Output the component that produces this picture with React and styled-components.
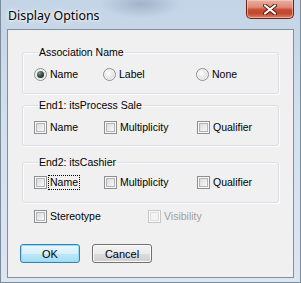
import React from "react";
import styled, { createGlobalStyle, css } from "styled-components";

const GlobalStyle = createGlobalStyle`
  html, body {
    margin: 0;
    padding: 0;
    background: #fff;
  }
  body {
    font-family: "Liberation Sans", Arial, sans-serif;
  }
`;

const Window = styled.div`
  box-sizing: border-box;
  width: 301px;
  height: 283px;
  display: flex;
  flex-direction: column;
  border: 1px solid #7b8c9d;
  border-top: none;
  background: linear-gradient(180deg, #c3d4e6 0%, #d2dfed 40%, #dbe6f1 100%);
`;

const TitleBar = styled.div`
  height: 29px;
  flex: none;
  display: flex;
  justify-content: space-between;
  align-items: flex-start;
  padding-left: 7px;
  background: radial-gradient(ellipse 40px 14px at 140px 4px, rgba(120, 140, 165, 0.45), transparent);
`;

const Title = styled.div`
  margin-top: 8px;
  font-family: "Noto Sans", "Open Sans", sans-serif;
  font-size: 12.4px;
  line-height: 15px;
  color: #000;
  text-shadow: 0 0 6px #fff, 0 0 3px #fff;
`;

const CloseButton = styled.div`
  width: 48px;
  height: 19px;
  margin-right: 6px;
  box-sizing: border-box;
  border: 1px solid #6a2318;
  border-top: none;
  border-radius: 0 0 5px 5px;
  background: linear-gradient(180deg, #eab0a2 0%, #dc8a76 40%, #c74a32 55%, #c4472e 75%, #d98468 100%);
  box-shadow: inset 0 0 0 1px rgba(255, 215, 200, 0.55);
  display: flex;
  align-items: center;
  justify-content: center;
`;

const Client = styled.div`
  flex: 1;
  margin: 0 6px 4px 6px;
  border: 1px solid #828f9c;
  background: #f0f0f0;
  padding: 16px 0 0 12px;
  display: flex;
  flex-direction: column;
  align-items: flex-start;
`;

const Group = styled.fieldset`
  box-sizing: border-box;
  width: 257px;
  margin: ${(p) => p.$mt || 0}px 0 0 2px;
  padding: ${(p) => p.$pt}px 0 ${(p) => p.$pb}px 11px;
  border: 1px solid #dcdfe3;
  border-radius: 3px;
  box-shadow: inset 1px 1px 0 #fbfbfb, 1px 1px 0 #fbfbfb;
  min-width: 0;
`;

const Legend = styled.legend`
  margin-left: 4px;
  padding: 0 1px;
  font-size: 10.5px;
  line-height: 13px;
  color: #000;
`;

const Row = styled.div`
  display: grid;
  grid-template-columns: ${(p) => p.$cols};
  align-items: center;
  height: 14px;
`;

const Option = styled.div`
  display: flex;
  align-items: center;
`;

const Box = styled.span`
  flex: none;
  box-sizing: border-box;
  width: 13px;
  height: 13px;
  border: 1px solid #8e8f8f;
  background: linear-gradient(135deg, #d3d3d3 0%, #f3f3f3 70%, #fdfdfd 100%);
  box-shadow: inset 0 0 0 1px #f8f8f8, inset 0 0 0 2px #b2b6bb;
  ${(p) =>
    p.$disabled &&
    css`
      border-color: #c6c6c6;
      background: #f4f4f4;
      box-shadow: inset 0 0 0 1px #fbfbfb, inset 0 0 0 2px #dcdcdc;
    `}
`;

const Radio = styled.span`
  flex: none;
  box-sizing: border-box;
  width: 13px;
  height: 13px;
  border-radius: 50%;
  border: 1px solid #8e8f8f;
  background: radial-gradient(circle at 40% 40%, #fdfdfd 0%, #e4e4e4 55%, #c9c9c9 100%);
  box-shadow: inset 0 0 0 1px #f4f4f4;
  display: flex;
  align-items: center;
  justify-content: center;
`;

const Dot = styled.span`
  width: 7px;
  height: 7px;
  border-radius: 50%;
  background: radial-gradient(circle at 35% 30%, #7c9a86 0%, #2b4535 55%, #0f1f16 100%);
`;

const Label = styled.span`
  margin-left: 1px;
  padding: 0 1px;
  border: 1px solid transparent;
  font-size: 10.5px;
  line-height: 13px;
  color: ${(p) => (p.$disabled ? "#a0a0a0" : "#000")};
  white-space: nowrap;
  ${(p) =>
    p.$focused &&
    css`
      border: 1px dotted #000;
    `}
`;

const BottomRow = styled.div`
  display: grid;
  grid-template-columns: 114px auto;
  align-items: center;
  height: 14px;
  margin-top: 6px;
  padding-left: 14px;
`;

const Buttons = styled.div`
  display: flex;
  gap: 12px;
  margin-top: 21px;
`;

const Button = styled.div`
  box-sizing: border-box;
  width: 60px;
  height: 19px;
  border: 1px solid #707070;
  border-radius: 3px;
  background: linear-gradient(180deg, #f2f2f2 0%, #ebebeb 50%, #dddddd 51%, #cfcfcf 100%);
  box-shadow: inset 0 0 0 1px #fbfbfb;
  display: flex;
  align-items: center;
  justify-content: center;
  font-size: 11px;
  color: #000;
  ${(p) =>
    p.$default &&
    css`
      border-color: #3c7fb1;
      background: linear-gradient(180deg, #eaf7fd 0%, #d6f0fb 50%, #bde7f8 51%, #a8dcf2 100%);
      box-shadow: inset 0 0 0 1px #8fe0f7;
    `}
`;

function Check({ label, focused, disabled }) {
  return (
    <Option>
      <Box $disabled={disabled} />
      <Label $focused={focused} $disabled={disabled}>
        {label}
      </Label>
    </Option>
  );
}

function RadioOption({ label, checked }) {
  return (
    <Option>
      <Radio>{checked && <Dot />}</Radio>
      <Label>{label}</Label>
    </Option>
  );
}

const checkCols = "70px 93px auto";

export default function App() {
  return (
    <>
      <GlobalStyle />
      <Window>
        <TitleBar>
          <Title>Display Options</Title>
          <CloseButton>
            <svg width="14" height="11" viewBox="0 0 14 11">
              <path d="M2 1.5 L12 9.5 M12 1.5 L2 9.5" stroke="#5a1a10" strokeWidth="4" strokeLinecap="round" />
              <path d="M2 1.5 L12 9.5 M12 1.5 L2 9.5" stroke="#fff" strokeWidth="2.2" strokeLinecap="round" />
            </svg>
          </CloseButton>
        </TitleBar>
        <Client>
          <Group $pt={8} $pb={12}>
            <Legend>Association Name</Legend>
            <Row $cols="69px 93px auto">
              <RadioOption label="Name" checked />
              <RadioOption label="Label" />
              <RadioOption label="None" />
            </Row>
          </Group>
          <Group $mt={5} $pt={8} $pb={11}>
            <Legend>End1: itsProcess Sale</Legend>
            <Row $cols={checkCols}>
              <Check label="Name" />
              <Check label="Multiplicity" />
              <Check label="Qualifier" />
            </Row>
          </Group>
          <Group $mt={10} $pt={6} $pb={13}>
            <Legend>End2: itsCashier</Legend>
            <Row $cols={checkCols}>
              <Check label="Name" focused />
              <Check label="Multiplicity" />
              <Check label="Qualifier" />
            </Row>
          </Group>
          <BottomRow>
            <Check label="Stereotype" />
            <Check label="Visibility" disabled />
          </BottomRow>
          <Buttons>
            <Button $default>OK</Button>
            <Button>Cancel</Button>
          </Buttons>
        </Client>
      </Window>
    </>
  );
}
